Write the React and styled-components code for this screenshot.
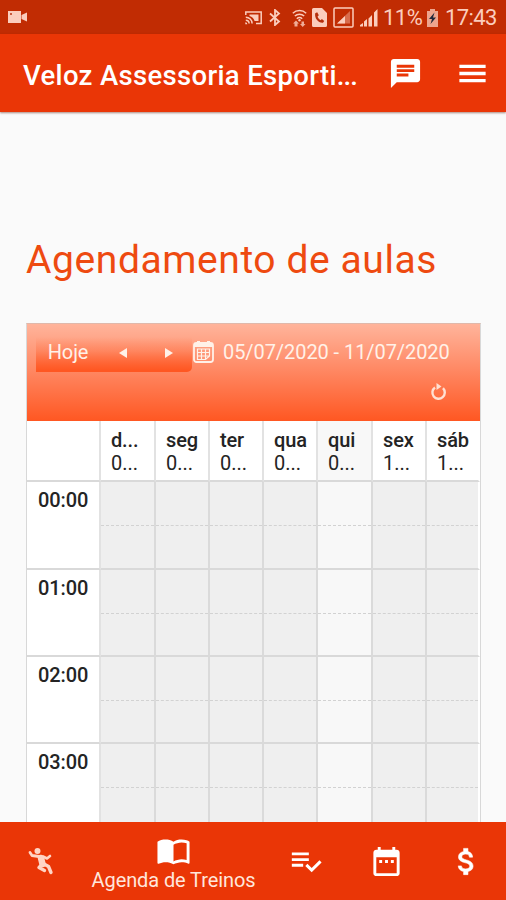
import React from "react";
import styled, { createGlobalStyle } from "styled-components";

const GlobalStyle = createGlobalStyle`
  * { box-sizing: border-box; }
  body { margin: 0; font-family: Roboto, sans-serif; background: #fafafa; }
`;

const Screen = styled.div`
  width: 506px;
  height: 900px;
  display: flex;
  flex-direction: column;
  overflow: hidden;
  background: #fafafa;
`;

const StatusBar = styled.div`
  flex: none;
  height: 34px;
  display: flex;
  align-items: center;
  padding: 1px 9px 0 7px;
  background: #c12c03;
  color: #fbcdbd;
`;

const StatusIcon = styled.svg`
  flex: none;
  display: block;
  width: ${(p) => p.$w}px;
  height: ${(p) => p.$h}px;
  margin-left: ${(p) => p.$gap || 0}px;
  fill: currentColor;
`;

const Spacer = styled.div`
  flex: 1;
`;

const StatusText = styled.span`
  font-size: 22px;
  line-height: 34px;
  width: ${(p) => p.$w}px;
  margin-left: ${(p) => p.$gap}px;
  letter-spacing: ${(p) => p.$track}px;
  white-space: nowrap;
`;

const AppBar = styled.header`
  flex: none;
  height: 78px;
  display: flex;
  align-items: center;
  padding: 0 16px 0 23px;
  background: #ea3606;
  color: #fff;
  box-shadow: 0 1px 2px rgba(90, 20, 0, 0.5);
  z-index: 1;
`;

const AppTitle = styled.h1`
  margin: 5px 0 0;
  width: 363px;
  font-size: 27.5px;
  font-weight: 500;
  line-height: 34px;
  letter-spacing: 0.33px;
  white-space: nowrap;
`;

const TitleDots = styled.span`
  letter-spacing: -0.9px;
`;

const BarIcon = styled.svg`
  flex: none;
  display: block;
  width: ${(p) => p.$size}px;
  height: ${(p) => p.$size}px;
  margin-left: ${(p) => p.$gap || 0}px;
  fill: #fff;
`;

const Content = styled.main`
  flex: 1;
  min-height: 0;
  overflow: hidden;
  padding: 123px 25px 0 26px;
`;

const Heading = styled.h2`
  margin: 0;
  height: 88px;
  font-size: 39px;
  font-weight: 400;
  line-height: 50px;
  letter-spacing: 0.58px;
  white-space: nowrap;
  color: #ee4a10;
`;

const Scheduler = styled.section`
  width: 455px;
  border: 1px solid #d8d8d8;
  border-top-color: #e0b8aa;
  background: #fff;
`;

const Toolbar = styled.div`
  height: 97px;
  padding: 13px 0 0 9px;
  background: linear-gradient(#ffb49b, #ff8a66 45%, #ff5722);
  color: #fff1e8;
`;

const ToolbarRow = styled.div`
  display: flex;
  align-items: center;
`;

const NavGroup = styled.div`
  display: grid;
  grid-template-columns: 64px 46px 46px;
  width: 156px;
  height: 35px;
  align-items: center;
  justify-items: center;
  padding-bottom: 3px;
  border-radius: 0 0 5px 0;
  background: linear-gradient(rgba(255, 87, 34, 0), rgba(255, 87, 34, 0.3) 40%, #ff5722 95%);
`;

const NavLabel = styled.span`
  font-size: 20px;
  line-height: 24px;
  margin-top: -2px;
  letter-spacing: -0.1px;
`;

const ArrowIcon = styled.svg`
  width: 8px;
  height: 10px;
  fill: #fff1e8;
`;

const CalendarIcon = styled.svg`
  width: 21px;
  height: 22px;
  margin: 0 9px 5px 1px;
`;

const DateRange = styled.span`
  font-size: 20px;
  line-height: 24px;
  letter-spacing: -0.07px;
  margin-bottom: 5px;
  white-space: nowrap;
`;

const RefreshRow = styled.div`
  display: flex;
  justify-content: flex-end;
  padding: 11px 33px 0 0;
`;

const RefreshIcon = styled.svg`
  width: 17px;
  height: 18px;
`;

const Columns = styled.div`
  display: grid;
  grid-template-columns: 74px 55px 54px 54px 54px 55px 54px 53px;
`;

const HeadCell = styled.div`
  height: 61px;
  padding: 8px 0 0 10px;
  border-right: 2px solid ${(p) => (p.$last ? "transparent" : "#e2e2e2")};
  border-bottom: 2px solid #d9d9d9;
  background: ${(p) => (p.$today ? "#f8f8f8" : "#fff")};
  color: #242424;
  font-size: 20px;
  font-weight: 500;
  line-height: 23px;
  white-space: nowrap;
`;

const DayName = styled.div`
  letter-spacing: -0.15px;
`;

const DayDate = styled.div`
  font-weight: 400;
`;

const HourCell = styled.div`
  height: ${(p) => p.$h}px;
  padding: 6px 0 0 11px;
  border-right: 2px solid #e2e2e2;
  border-bottom: 2px solid #d9d9d9;
  color: #242424;
  font-size: 20px;
  font-weight: 500;
  line-height: 24px;
  letter-spacing: -0.1px;
`;

const SlotCell = styled.div`
  display: flex;
  flex-direction: column;
  height: ${(p) => p.$h}px;
  border-right: 2px solid ${(p) => (p.$last ? "transparent" : "#dadada")};
  border-bottom: 2px solid #d9d9d9;
  background: ${(p) => (p.$today ? "#f8f8f8" : "#efefef")};
  background-clip: padding-box;
`;

const HalfHour = styled.div`
  height: 44px;
  border-bottom: 1px dashed #d2d2d2;
`;

const BottomNav = styled.nav`
  flex: none;
  height: 78px;
  display: grid;
  grid-template-columns: 81px 185px 80px 80px 80px;
  background: #ea3606;
  color: #fff;
  z-index: 1;
`;

const NavItem = styled.div`
  display: flex;
  flex-direction: column;
  align-items: center;
  padding-top: ${(p) => p.$top}px;
`;

const NavIcon = styled.svg`
  display: block;
  width: ${(p) => p.$size}px;
  height: ${(p) => p.$size}px;
  fill: ${(p) => p.$tint || "#fff"};
`;

const NavText = styled.span`
  font-size: 20px;
  line-height: 24px;
  letter-spacing: -0.1px;
  color: #ffe6dc;
  white-space: nowrap;
`;

const days = [
  ["d...", "0..."],
  ["seg", "0..."],
  ["ter", "0..."],
  ["qua", "0..."],
  ["qui", "0..."],
  ["sex", "1..."],
  ["sáb", "1..."],
];
const TODAY = 4;
const hours = [
  ["00:00", 88],
  ["01:00", 87],
  ["02:00", 87],
  ["03:00", 88],
];

function StatusIcons() {
  return (
    <>
      <StatusIcon $w={20} $h={13} viewBox="0 0 20 13">
        <path d="M1 0h13v12H1zM14.5 4 20 1.5v9L14.5 8z" />
        <path d="M3 2h2v2H3z" fill="#c95a3d" />
      </StatusIcon>
      <Spacer />
      <StatusIcon $w={17} $h={14} viewBox="0 0 17 14">
        <path d="M.8 4V1h15.4v11.5H11M.8 6.2a6.3 6.3 0 0 1 6.3 6.3M.8 9.2a3.3 3.3 0 0 1 3.3 3.3" fill="none" stroke="currentColor" strokeWidth="1.5" />
        <path d="M.3 11.3a2 2 0 0 1 2 2h-2zM4.5 3.5h9V10H9.6A8 8 0 0 0 4.5 5z" />
      </StatusIcon>
      <StatusIcon $w={12} $h={17} $gap={7} viewBox="0 0 12 17">
        <path d="m1 4.5 9 8L6 16V1l4 3.5-9 8" fill="none" stroke="currentColor" strokeWidth="1.8" />
      </StatusIcon>
      <StatusIcon $w={15} $h={18} $gap={11} viewBox="0 0 15 18">
        <path d="M.8 4.2a10 10 0 0 1 13.4 0M2.8 7a7 7 0 0 1 9.4 0M4.8 9.7a4 4 0 0 1 5.4 0" fill="none" stroke="currentColor" strokeWidth="1.5" />
        <circle cx="7.5" cy="11.3" r="1.2" />
        <path d="M2.5 17.5v-3H1L4 11.5l3 3H5.5v3zM9.5 12.5H12V15h1.500l-2.800 3L8 15h1.500z" opacity=".8" />
      </StatusIcon>
      <StatusIcon $w={15} $h={19} $gap={5} viewBox="0 0 15 19">
        <path d="M1.500 0H10l5 5v12.500a1.500 1.500 0 0 1-1.500 1.500h-12A1.500 1.500 0 0 1 0 17.500v-16A1.500 1.500 0 0 1 1.500 0z" />
        <path d="m3.200 5.300 2-1 1.600 3-1.200 1.200c.6 1.800 1.600 2.900 3 3.700l1.300-1.100 2.300 2-1.200 1.700C6.500 15.300 2.300 10.500 3.200 5.300z" fill="#b52e0c" />
      </StatusIcon>
      <StatusIcon $w={21} $h={21} $gap={6} viewBox="0 0 21 21">
        <rect x="1" y="1" width="19" height="19" rx="1" fill="none" stroke="currentColor" strokeWidth="1.500" />
        <path d="M4 16.500 17 4v12.500z" opacity=".4" />
        <path d="M4 16.500 12 9v7.500z" />
      </StatusIcon>
      <StatusIcon $w={18} $h={18} $gap={6} viewBox="0 0 18 18">
        <path d="M0 17.500V16l3-2v3.500zM4 17.500v-5L7 10v7.500zM8.500 17.500v-8L12 6v11.500zM14 17.500V3.500L17.500 0v17.500z" />
      </StatusIcon>
      <StatusText $w={39} $gap={5} $track={-0.5}>11%</StatusText>
      <StatusIcon $w={11} $h={18} $gap={5} viewBox="0 0 11 18">
        <path d="M3 0h5v2h3v16H0V2h3z" opacity=".75" />
        <path d="M7.500 3.500 2 10h3l-1.500 5L9 8.500H6z" fill="#20283a" />
      </StatusIcon>
      <StatusText $w={52} $gap={7} $track={-0.6}>17:43</StatusText>
    </>
  );
}

export default function App() {
  return (
    <>
      <GlobalStyle />
      <Screen>
        <StatusBar>
          <StatusIcons />
        </StatusBar>
        <AppBar>
          <AppTitle>Veloz Assessoria Esporti<TitleDots>...</TitleDots></AppTitle>
          <BarIcon $size={35} viewBox="0 0 24 24" $gap={3}>
            <path d="M20 2H4c-1.100 0-1.990.9-1.990 2L2 22l4-4h14c1.100 0 2-.9 2-2V4c0-1.100-.9-2-2-2zM6 9h12v2H6V9zm8 5H6v-2h8v2zm4-6H6V6h12v2z" />
          </BarIcon>
          <BarIcon $size={35} viewBox="0 0 24 24" $gap={32}>
            <path d="M3 18h18v-2.300H3V18zm0-4.850h18v-2.300H3v2.300zM3 6v2.300h18V6H3z" />
          </BarIcon>
        </AppBar>
        <Content>
          <Heading>Agendamento de aulas</Heading>
          <Scheduler>
            <Toolbar>
              <ToolbarRow>
                <NavGroup>
                  <NavLabel>Hoje</NavLabel>
                  <ArrowIcon viewBox="0 0 8 10"><path d="M8 0v10L0 5z" /></ArrowIcon>
                  <ArrowIcon viewBox="0 0 8 10"><path d="M0 0v10l8-5z" /></ArrowIcon>
                </NavGroup>
                <CalendarIcon viewBox="0 0 21 22">
                  <rect x="1" y="2" width="19" height="19" rx="2.500" fill="none" stroke="#fff1e8" strokeWidth="1.800" />
                  <path d="M1 2h19v4H1zM4 0h3v3H4zM14 0h3v3h-3z" fill="#fff1e8" />
                  <path d="M4.500 8h12v7l-4 3.500h-8zM8.500 8v10.500M12.500 8v10.500M4.500 11.500h12M4.500 15h12" fill="none" stroke="#fff1e8" strokeWidth="1.200" />
                </CalendarIcon>
                <DateRange>05/07/2020 - 11/07/2020</DateRange>
              </ToolbarRow>
              <RefreshRow>
                <RefreshIcon viewBox="0 0 17 18">
                  <path d="M5 4.500A6.200 6.200 0 1 0 13 5.200" fill="none" stroke="#ffe0d2" strokeWidth="2.400" />
                  <path d="M6.500 0v7l5-3.500z" fill="#ffe0d2" />
                </RefreshIcon>
              </RefreshRow>
            </Toolbar>
            <Columns>
              <HeadCell />
              {days.map(([name, date], i) => (
                <HeadCell key={i} $today={i === TODAY} $last={i === 6}>
                  <DayName>{name}</DayName>
                  <DayDate>{date}</DayDate>
                </HeadCell>
              ))}
              {hours.map(([label, h]) => (
                <React.Fragment key={label}>
                  <HourCell $h={h}>{label}</HourCell>
                  {days.map((_, i) => (
                    <SlotCell key={i} $h={h} $today={i === TODAY} $last={i === 6}>
                      <HalfHour />
                    </SlotCell>
                  ))}
                </React.Fragment>
              ))}
            </Columns>
          </Scheduler>
        </Content>
        <BottomNav>
          <NavItem $top={25}>
            <NavIcon $size={28} viewBox="0 0 28 28" $tint="#ffd5c5">
              <circle cx="10.500" cy="4" r="3" />
              <g fill="none" stroke="#ffd5c5" strokeLinecap="round" strokeLinejoin="round">
                <path d="M3 5.500 5 8.500l7 1" strokeWidth="2.800" />
                <path d="M14 11 15.500 17" strokeWidth="6.500" />
                <path d="M16 9.500 20 11.500 23 9" strokeWidth="2.600" />
                <path d="M14 18.500 12 20.500 17.500 23.500" strokeWidth="3.400" />
                <path d="M17 17 21.500 19.500 24 25.500" strokeWidth="3.400" />
              </g>
            </NavIcon>
          </NavItem>
          <NavItem $top={11}>
            <NavIcon $size={35} viewBox="0 0 24 24">
              <path d="M21 5c-1.110-.35-2.330-.5-3.500-.5-1.950 0-4.050.4-5.500 1.500-1.450-1.100-3.550-1.500-5.500-1.500S2.450 4.900 1 6v14.650c0 .25.25.5.5.5.1 0 .15-.05.25-.05C3.100 20.450 5.050 20 6.500 20c1.950 0 4.050.4 5.500 1.500 1.350-.85 3.800-1.500 5.500-1.500 1.650 0 3.350.3 4.750 1.050.1.05.15.05.25.05.25 0 .5-.25.5-.5V6c-.6-.45-1.250-.75-2-1zm0 13.500c-1.100-.35-2.300-.5-3.500-.5-1.700 0-4.150.65-5.500 1.500V8c1.350-.85 3.800-1.500 5.500-1.500 1.200 0 2.400.15 3.500.5v11.500z" />
            </NavIcon>
            <NavText>Agenda de Treinos</NavText>
          </NavItem>
          <NavItem $top={22}>
            <NavIcon $size={34} viewBox="0 0 24 24">
              <path d="M14 10H2v2h12v-2zm0-4H2v2h12V6zM2 16h8v-2H2v2zm19.500-4.500L23 13l-6.990 7-4.510-4.500L13 14l3.010 3 5.490-5.500z" />
            </NavIcon>
          </NavItem>
          <NavItem $top={22}>
            <NavIcon $size={35} viewBox="0 0 24 24">
              <path d="M9 11H7v2h2v-2zm4 0h-2v2h2v-2zm4 0h-2v2h2v-2zm2-7h-1V2h-2v2H8V2H6v2H5c-1.110 0-1.990.9-1.990 2L3 20c0 1.100.89 2 2 2h14c1.100 0 2-.9 2-2V6c0-1.100-.9-2-2-2zm0 16H5V9h14v11z" />
            </NavIcon>
          </NavItem>
          <NavItem $top={22}>
            <NavIcon $size={35} viewBox="0 0 24 24">
              <path stroke="#fff" strokeWidth=".4" d="M11.800 10.900c-2.270-.59-3-1.200-3-2.150 0-1.090 1.010-1.850 2.700-1.850 1.780 0 2.440.85 2.500 2.100h2.210c-.07-1.720-1.120-3.300-3.210-3.810V3h-3v2.160c-1.940.42-3.500 1.680-3.500 3.610 0 2.310 1.910 3.460 4.700 4.130 2.500.6 3 1.480 3 2.410 0 .69-.49 1.790-2.700 1.790-2.060 0-2.870-.92-2.980-2.100h-2.200c.12 2.190 1.760 3.420 3.680 3.830V21h3v-2.150c1.950-.37 3.500-1.500 3.500-3.550 0-2.840-2.430-3.810-4.700-4.400z" />
            </NavIcon>
          </NavItem>
        </BottomNav>
      </Screen>
    </>
  );
}
